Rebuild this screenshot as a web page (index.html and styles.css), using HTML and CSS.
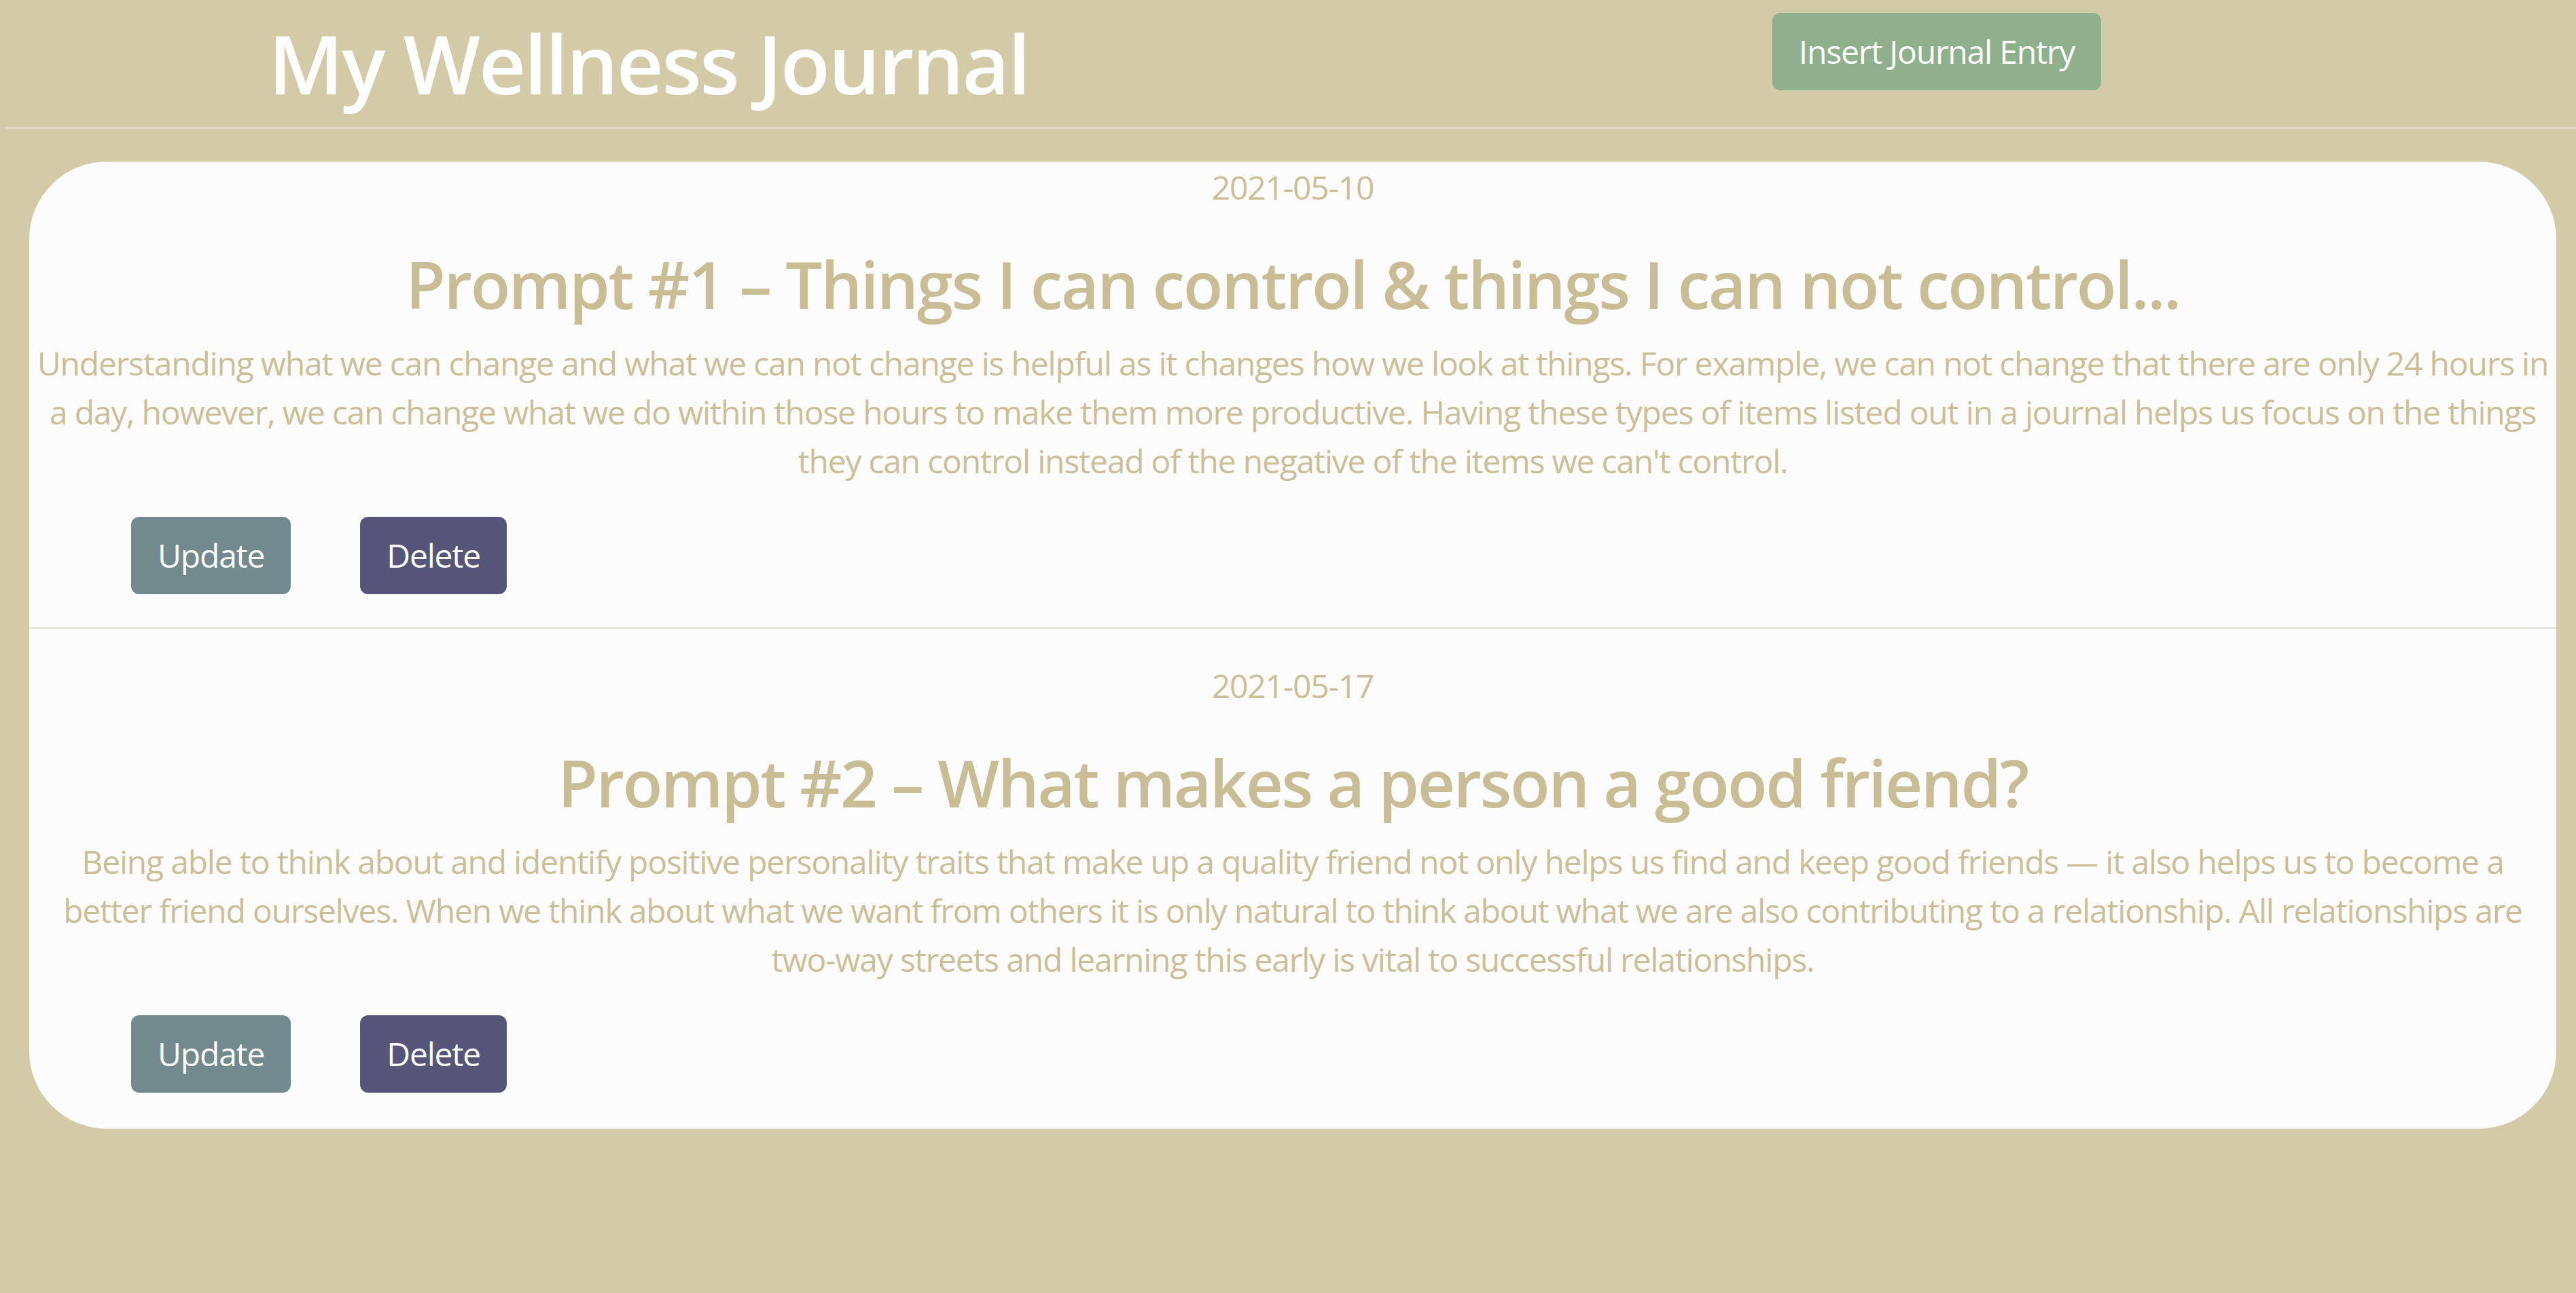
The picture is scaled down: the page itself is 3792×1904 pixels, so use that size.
FILE: index.html
```html
<!DOCTYPE html>
<html lang="en">
<head>
<meta charset="utf-8">
<title>My Wellness Journal</title>
<link rel="stylesheet" href="styles.css">
</head>
<body>
<header class="topbar">
  <div class="brand-col"><h1 class="brand">My Wellness Journal</h1></div>
  <div class="action-col"><button class="btn btn-insert" type="button">Insert Journal Entry</button></div>
</header>
<hr class="top-rule">
<main class="journal">
  <article class="entry">
    <p class="entry-date">2021-05-10</p>
    <h2 class="entry-title">Prompt #1 – Things I can control &amp; things I can not control...</h2>
    <p class="entry-body">Understanding what we can change and what we can not change is helpful as it changes how we look at things. For example, we can not change that there are only 24 hours in a day, however, we can change what we do within those hours to make them more productive. Having these types of items listed out in a journal helps us focus on the things they can control instead of the negative of the items we can't control.</p>
    <div class="entry-actions">
      <button class="btn btn-update" type="button">Update</button>
      <button class="btn btn-delete" type="button">Delete</button>
    </div>
  </article>
  <article class="entry">
    <p class="entry-date">2021-05-17</p>
    <h2 class="entry-title">Prompt #2 – What makes a person a good friend?</h2>
    <p class="entry-body">Being able to think about and identify positive personality traits that make up a quality friend not only helps us find and keep good friends — it also helps us to become a better friend ourselves. When we think about what we want from others it is only natural to think about what we are also contributing to a relationship. All relationships are two-way streets and learning this early is vital to successful relationships.</p>
    <div class="entry-actions">
      <button class="btn btn-update" type="button">Update</button>
      <button class="btn btn-delete" type="button">Delete</button>
    </div>
  </article>
</main>
</body>
</html>
```

FILE: styles.css
```css
* { box-sizing: border-box; }

html, body {
  margin: 0;
  padding: 0;
}

body {
  background: #d3cba8;
  font-family: "Open Sans", "Noto Sans", sans-serif;
  font-size: 48px;
  line-height: 72px;
  letter-spacing: -0.025em;
  color: #cbbf98;
  min-height: 1904px;
}

.topbar {
  display: grid;
  grid-template-columns: 1910px 1882px;
  align-items: start;
}

.brand-col,
.action-col {
  text-align: center;
}

.brand {
  margin: 21px 0 22px;
  font-size: 120px;
  line-height: 144px;
  font-weight: 600;
  letter-spacing: -0.02em;
  color: #ffffff;
}

.action-col {
  padding-top: 19px;
}

.btn {
  font-family: inherit;
  font-size: 48px;
  line-height: 72px;
  letter-spacing: -0.025em;
  padding: 18px 36px;
  border: 3px solid transparent;
  border-radius: 12px;
  color: #ffffff;
  cursor: pointer;
}

.btn-insert {
  background: #8fb08c;
  border-color: #8fb08c;
}

.btn-update {
  background: #728a8e;
  border-color: #728a8e;
}

.btn-delete {
  background: #55557a;
  border-color: #55557a;
}

.top-rule {
  margin: 0 0 50px 8px;
  height: 0;
  border: 0;
  border-top: 3px solid #dfd9c4;
}

.journal {
  margin: -2px 29px 0 43px;
  background: #fcfcfc;
  border-radius: 114px;
  padding-top: 2px;
  padding-bottom: 5px;
  overflow: hidden;
}

.entry {
  text-align: center;
}

.entry + .entry {
  border-top: 3px solid #e7e6e1;
  padding-top: 48px;
}

.entry-date {
  margin: 0 0 48px;
}

.entry-title {
  margin: 0 0 24px;
  font-size: 96px;
  line-height: 115px;
  font-weight: 600;
  letter-spacing: -0.025em;
  color: #c9bd95;
}

.entry-body {
  margin: 0 0 46px;
  padding: 0 9px;
}

.entry-actions {
  display: flex;
  gap: 102px;
  padding-left: 150px;
  margin-bottom: 48px;
}
```
